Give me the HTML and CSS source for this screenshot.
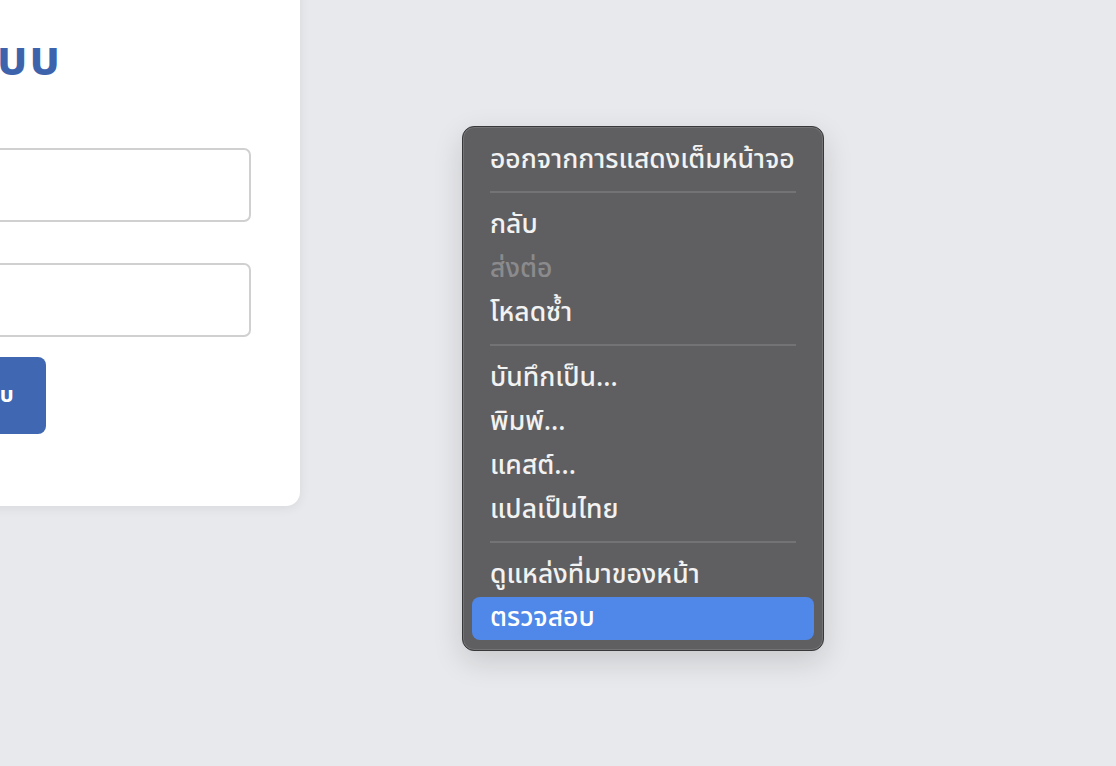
FILE: index.html
```html
<!DOCTYPE html>
<html lang="th">
<head>
<meta charset="utf-8">
<title>เข้าสู่ระบบ</title>
<link rel="stylesheet" href="styles.css">
</head>
<body>
<main class="stage">
  <section class="card">
    <h1 class="title">เข้าสู่ระบบ</h1>
    <form class="form">
      <input class="field" type="text" aria-label="ชื่อผู้ใช้">
      <input class="field" type="password" aria-label="รหัสผ่าน">
      <button class="submit" type="button">เข้าสู่ระบบ</button>
    </form>
  </section>
</main>
<div class="menu" role="menu">
  <div class="item">ออกจากการแสดงเต็มหน้าจอ</div>
  <div class="sep"></div>
  <div class="item">กลับ</div>
  <div class="item disabled">ส่งต่อ</div>
  <div class="item">โหลดซ้ำ</div>
  <div class="sep"></div>
  <div class="item">บันทึกเป็น...</div>
  <div class="item">พิมพ์...</div>
  <div class="item">แคสต์...</div>
  <div class="item">แปลเป็นไทย</div>
  <div class="sep"></div>
  <div class="item">ดูแหล่งที่มาของหน้า</div>
  <div class="item active">ตรวจสอบ</div>
</div>
</body>
</html>
```
FILE: styles.css
```css
html, body {
  margin: 0;
  height: 100%;
}
body {
  background: #e8e9ec;
  font-family: "Noto Sans Thai", "Thonburi", "Loma", "Garuda", "Noto Sans", "DejaVu Sans", sans-serif;
  overflow: hidden;
  position: relative;
}
.stage {
  display: flex;
  align-items: flex-start;
}
.card {
  box-sizing: content-box;
  width: 401px;
  margin-left: -199px;
  margin-top: -40px;
  background: #ffffff;
  border-radius: 14px;
  box-shadow: 0 2px 12px rgba(0, 0, 0, 0.07);
  padding: 70px 49px 72px 49px;
}
.title {
  margin: 0 0 58px 0;
  font-size: 48px;
  line-height: 60px;
  letter-spacing: 2px;
  font-weight: 700;
  color: #3e63ad;
}
.form {
  display: flex;
  flex-direction: column;
  align-items: flex-start;
}
.field {
  width: 100%;
  height: 74px;
  box-sizing: border-box;
  border: 2px solid #d0d0d0;
  border-radius: 7px;
  background: #fff;
  margin-bottom: 41px;
}
.field + .field {
  margin-bottom: 20px;
}
.submit {
  height: 77px;
  margin-left: 42px;
  padding: 0 32px;
  border: 0;
  border-radius: 8px;
  background: #4067b1;
  color: #fff;
  font-family: inherit;
  font-size: 22px;
  font-weight: 700;
}
.menu {
  position: absolute;
  left: 462px;
  top: 126px;
  width: 362px;
  box-sizing: border-box;
  padding: 11px 9px 10px 9px;
  background: #5f5f61;
  border: 1px solid #38383a;
  border-radius: 12px;
  box-shadow: inset 0 0 0 1px rgba(255, 255, 255, 0.13), 0 10px 30px rgba(0, 0, 0, 0.14);
}
.item {
  height: 44px;
  line-height: 44px;
  padding: 0 18px;
  color: #f2f2f2;
  font-size: 26.5px;
  font-weight: 500;
  border-radius: 8px;
  white-space: nowrap;
}
.item.disabled {
  color: #8b8b8d;
}
.item.active {
  background: #4f88e9;
  color: #ffffff;
  height: 43px;
  line-height: 43px;
}
.sep {
  height: 2px;
  margin: 9px 18px 10px 18px;
  background: #737375;
}
```
